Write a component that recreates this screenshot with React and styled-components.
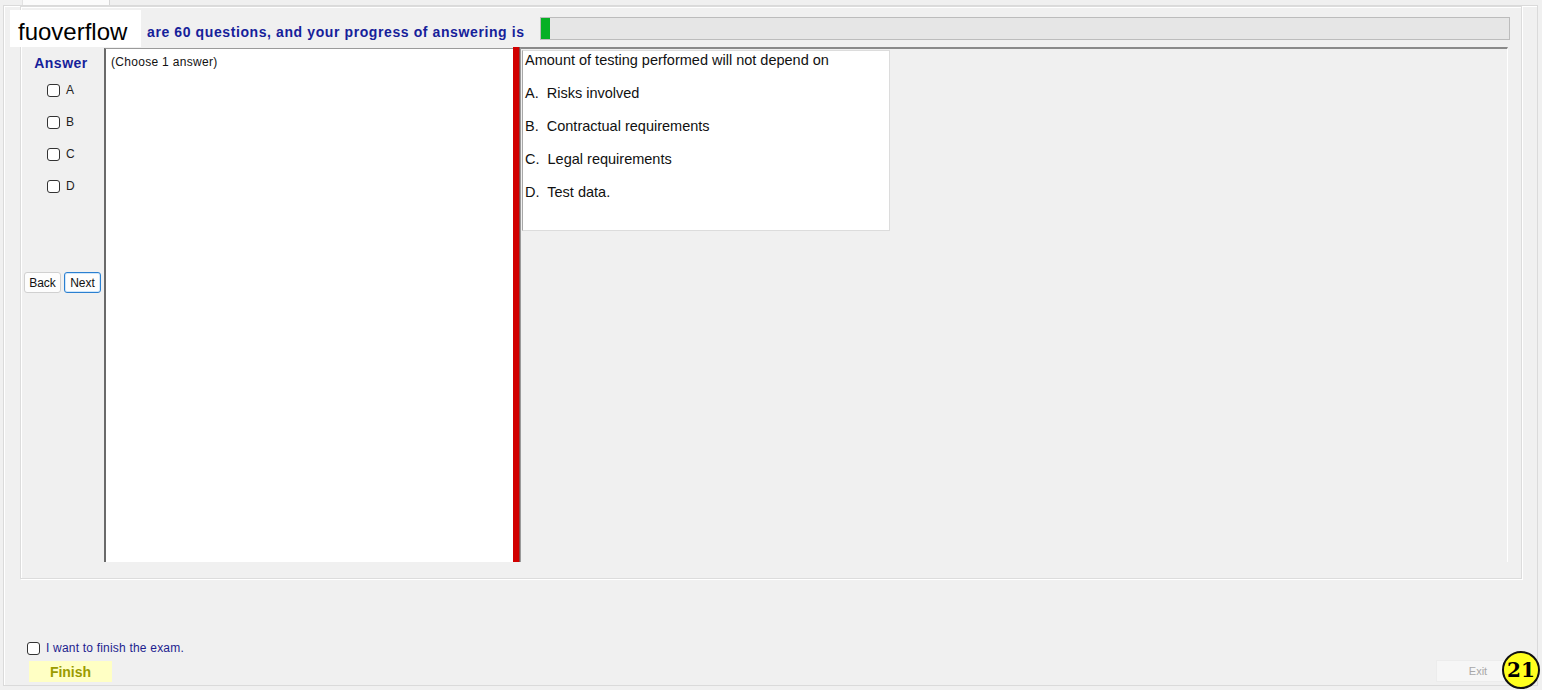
import React from "react";
import styled, { createGlobalStyle } from "styled-components";

const Global = createGlobalStyle`
  * { box-sizing: border-box; }
  html, body { margin: 0; padding: 0; background: #f0f0f0; }
  body { font-family: "Liberation Sans", Arial, sans-serif; }
`;

const Page = styled.div`
  position: relative;
  width: 1542px;
  height: 690px;
  background: #f0f0f0;
  overflow: hidden;
`;

const TabStrip = styled.div`
  height: 5px;
  display: flex;
`;

const Tab = styled.div`
  margin-left: 22px;
  width: 88px;
  height: 5px;
  background: #fbfbfb;
  border-left: 1px solid #e2e2e2;
  border-right: 1px solid #d6d6d6;
`;

const TabPanel = styled.div`
  margin-left: 3px;
  width: 1535px;
  height: 681px;
  border: 1px solid #dadada;
  box-shadow: inset 1px 1px 0 #ffffff;
  display: flex;
  flex-direction: column;
  padding-left: 16px;
  padding-right: 15px;
`;

const GroupBox = styled.div`
  width: 1502px;
  height: 573px;
  border: 1px solid #dcdcdc;
  box-shadow: inset 1px 1px 0 #ffffff, 1px 1px 0 #ffffff;
  padding: 10px 0 0 1px;
  display: flex;
  flex-direction: column;
  gap: 7px;
`;

const HeaderRow = styled.div`
  height: 23px;
  display: flex;
  align-items: center;
`;

const HeaderText = styled.div`
  margin-left: 125px;
  font-size: 14px;
  letter-spacing: 0.6px;
  font-weight: bold;
  color: #16219a;
  white-space: nowrap;
  padding-top: 7px;
`;

const Progress = styled.div`
  margin-left: auto;
  margin-right: 11px;
  width: 970px;
  height: 23px;
  background: #e6e6e6;
  border: 1px solid #bcbcbc;
  display: flex;
`;

const ProgressFill = styled.div`
  height: 100%;
  background: #06b025;
`;

const ContentRow = styled.div`
  display: flex;
  height: 515px;
  width: 1486px;
`;

const LeftCol = styled.div`
  width: 82px;
  flex: none;
  display: flex;
  flex-direction: column;
`;

const AnswerLabel = styled.div`
  margin-top: 8px;
  padding-right: 4px;
  text-align: center;
  font-size: 14px;
  letter-spacing: 0.5px;
  line-height: 16px;
  font-weight: bold;
  color: #16219a;
`;

const AnswerList = styled.div`
  margin-top: 3px;
  display: flex;
  flex-direction: column;
`;

const AnswerRow = styled.label`
  height: 32px;
  display: flex;
  align-items: center;
  gap: 6px;
  padding-left: 25px;
  font-size: 12px;
  color: #222;
`;

const Box = styled.span`
  display: inline-block;
  width: 13px;
  height: 13px;
  border: 1px solid #333;
  border-radius: 3px;
  background: #fff;
  flex: none;
`;

const NavRow = styled.div`
  margin-top: 70px;
  display: flex;
  gap: 3px;
  padding-left: 2px;
`;

const NavButton = styled.button`
  width: 37px;
  height: 21px;
  padding: 0;
  font-family: "Liberation Sans", Arial, sans-serif;
  font-size: 12px;
  color: #111;
  background: #fdfdfd;
  border: 1px solid ${(p) => (p.$focused ? "#2a7fd0" : "#d0d0d0")};
  border-radius: 3px;
  box-shadow: ${(p) => (p.$focused ? "inset 0 0 0 1px #cfe6fa" : "none")};
`;

const WhitePanel = styled.div`
  width: 409px;
  flex: none;
  background: #fff;
  border-left: 2px solid #6a6a6a;
  border-top: 1px solid #9a9a9a;
  margin-top: 1px;
  padding: 6px 5px;
  font-size: 12px;
  letter-spacing: 0.3px;
  line-height: 14px;
  color: #111;
`;

const RedBar = styled.div`
  width: 7px;
  flex: none;
  background: #d10000;
  border-right: 1px solid #8a4a4a;
`;

const RightPanel = styled.div`
  flex: 1;
  background: #f0f0f0;
  border-top: 2px solid #8a8a8a;
  border-left: 1px solid #9a9a9a;
  border-right: 1px solid #ffffff;
  padding: 1px 0 0 1px;
`;

const QuestionBox = styled.div`
  width: 368px;
  height: 181px;
  background: #fff;
  border: 1px solid #dcdcdc;
  border-left: 1px solid #a8a8a8;
  padding: 1px 2px;
  display: flex;
  flex-direction: column;
  gap: 17px;
`;

const QLine = styled.div`
  font-size: 14.5px;
  line-height: 16px;
  color: #111;
  white-space: pre;
`;

const BottomArea = styled.div`
  margin-top: auto;
  padding-bottom: 3px;
  display: flex;
  align-items: flex-end;
  justify-content: space-between;
  padding-right: 2px;
`;

const FinishBlock = styled.div`
  margin-left: 7px;
  display: flex;
  flex-direction: column;
  gap: 5px;
`;

const FinishCheckRow = styled.label`
  height: 16px;
  display: flex;
  align-items: center;
  gap: 6px;
  font-size: 12px;
  letter-spacing: 0.2px;
  color: #1d1d8f;
`;

const FinishButton = styled.button`
  margin-left: 2px;
  width: 83px;
  height: 21px;
  padding: 0;
  border: none;
  background: #ffffc4;
  color: #9b9b00;
  font-family: "Liberation Sans", Arial, sans-serif;
  font-weight: bold;
  font-size: 14px;
`;

const ExitButton = styled.button`
  width: 84px;
  height: 22px;
  padding: 0;
  border: 1px solid #ececec;
  background: #f6f6f6;
  color: #a8a8a8;
  font-family: "Liberation Sans", Arial, sans-serif;
  font-size: 11px;
`;

const Watermark = styled.div`
  position: absolute;
  left: 10px;
  top: 10px;
  width: 131px;
  height: 37px;
  background: #fff;
  padding-left: 8px;
  font-size: 24px;
  line-height: 44px;
  color: #000;
`;

const Badge = styled.div`
  position: absolute;
  left: 1502px;
  top: 651px;
  width: 38px;
  height: 38px;
  border-radius: 50%;
  background: #ffff1e;
  border: 2px solid #111;
  display: flex;
  align-items: center;
  justify-content: center;
  font-family: "DejaVu Serif", "Liberation Serif", serif;
  font-weight: bold;
  font-size: 20px;
  color: #000;
`;

const answers = ["A", "B", "C", "D"];
const options = [
  "A.  Risks involved",
  "B.  Contractual requirements",
  "C.  Legal requirements",
  "D.  Test data.",
];

export default function App() {
  return (
    <Page>
      <Global />
      <TabStrip>
        <Tab />
      </TabStrip>
      <TabPanel>
        <GroupBox>
          <HeaderRow>
            <HeaderText>are 60 questions, and your progress of answering is</HeaderText>
            <Progress>
              <ProgressFill style={{ width: `${(1 / 60) * 100 * 0.55}%` }} />
            </Progress>
          </HeaderRow>
          <ContentRow>
            <LeftCol>
              <AnswerLabel>Answer</AnswerLabel>
              <AnswerList>
                {answers.map((a) => (
                  <AnswerRow key={a}>
                    <Box />
                    {a}
                  </AnswerRow>
                ))}
              </AnswerList>
              <NavRow>
                <NavButton>Back</NavButton>
                <NavButton $focused>Next</NavButton>
              </NavRow>
            </LeftCol>
            <WhitePanel>(Choose 1 answer)</WhitePanel>
            <RedBar />
            <RightPanel>
              <QuestionBox>
                <QLine>Amount of testing performed will not depend on</QLine>
                {options.map((o) => (
                  <QLine key={o}>{o}</QLine>
                ))}
              </QuestionBox>
            </RightPanel>
          </ContentRow>
        </GroupBox>
        <BottomArea>
          <FinishBlock>
            <FinishCheckRow>
              <Box />
              I want to finish the exam.
            </FinishCheckRow>
            <FinishButton>Finish</FinishButton>
          </FinishBlock>
          <ExitButton>Exit</ExitButton>
        </BottomArea>
      </TabPanel>
      <Watermark>fuoverflow</Watermark>
      <Badge>21</Badge>
    </Page>
  );
}
